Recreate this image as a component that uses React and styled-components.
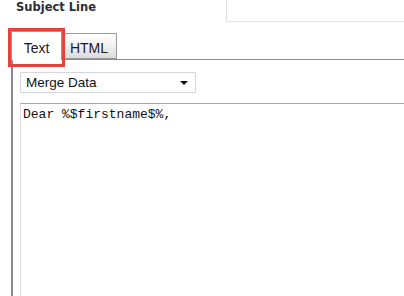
import React from "react";
import styled, { createGlobalStyle } from "styled-components";

const Global = createGlobalStyle`
  html, body {
    margin: 0;
    padding: 0;
    background: #ffffff;
    overflow: hidden;
  }
  body {
    width: 404px;
    height: 296px;
  }
`;

const Page = styled.div`
  width: 404px;
  height: 296px;
  overflow: hidden;
  position: relative;
`;

const HeaderRow = styled.div`
  display: flex;
  align-items: flex-start;
  height: 21px;
`;

const Label = styled.div`
  font-family: "DejaVu Sans", Verdana, sans-serif;
  font-weight: bold;
  font-size: 11.5px;
  line-height: 13px;
  color: #2e2e38;
  padding: 1px 0 0 16px;
  width: 210px;
`;

const SubjectInput = styled.div`
  flex: 1;
  height: 30px;
  margin-top: -10px;
  border: 1px solid #dcdfe3;
  border-right: none;
  background: #fff;
`;

const TabBar = styled.div`
  display: flex;
  align-items: flex-end;
  padding: 10px 0 0 11px;
  height: 28px;
  position: relative;
`;

const Tab = styled.div`
  box-sizing: border-box;
  width: ${(p) => p.$w}px;
  height: ${(p) => (p.$active ? 29 : 26)}px;
  margin-bottom: ${(p) => (p.$active ? -1 : 0)}px;
  border: 1px solid #9a9a9a;
  border-bottom: ${(p) => (p.$active ? "none" : "1px solid #9a9a9a")};
  border-left: ${(p) => (p.$active ? "1px solid #9a9a9a" : "none")};
  background: ${(p) =>
    p.$active ? "#ffffff" : "linear-gradient(#ffffff 0%, #f2f2f2 45%, #dcdcdc 100%)"};
  font-family: "Liberation Sans", Arial, sans-serif;
  font-size: 14px;
  color: #1a1a2a;
  display: flex;
  justify-content: center;
  padding-top: ${(p) => (p.$active ? 8 : 6)}px;
  position: relative;
  z-index: 1;
`;

const Highlight = styled.div`
  position: absolute;
  left: 8px;
  top: 28px;
  width: 57px;
  height: 39px;
  box-sizing: border-box;
  border: 3px solid #e8423f;
  z-index: 3;
  pointer-events: none;
`;

const Panel = styled.div`
  margin-left: 11px;
  border-left: 2px solid #8a8a8a;
  border-top: 1px solid #8a8a8a;
  height: 240px;
  padding: 12px 0 0 7px;
`;

const Select = styled.div`
  box-sizing: border-box;
  width: 176px;
  height: 21px;
  border: 1px solid #d3d6da;
  border-radius: 1px;
  display: flex;
  align-items: center;
  justify-content: space-between;
  padding: 0 7px 0 5px;
  font-family: "Liberation Sans", Arial, sans-serif;
  font-size: 13.5px;
  color: #111;
`;

const Arrow = styled.span`
  width: 0;
  height: 0;
  border-left: 4px solid transparent;
  border-right: 4px solid transparent;
  border-top: 4px solid #111;
`;

const TextArea = styled.div`
  margin-top: 10px;
  height: 200px;
  border-top: 1px solid #a9a9a9;
  border-left: 1px solid #dedede;
  padding: 3px 0 0 2px;
  font-family: "Liberation Mono", "Courier New", monospace;
  font-size: 13px;
  line-height: 15px;
  color: #111;
  white-space: pre;
`;

export default function App() {
  return (
    <Page>
      <Global />
      <HeaderRow>
        <Label>Subject Line</Label>
        <SubjectInput />
      </HeaderRow>
      <TabBar>
        <Tab $active $w={51}>Text</Tab>
        <Tab $w={55}>HTML</Tab>
      </TabBar>
      <Highlight />
      <Panel>
        <Select>
          Merge Data
          <Arrow />
        </Select>
        <TextArea>Dear %$firstname$%,</TextArea>
      </Panel>
    </Page>
  );
}
